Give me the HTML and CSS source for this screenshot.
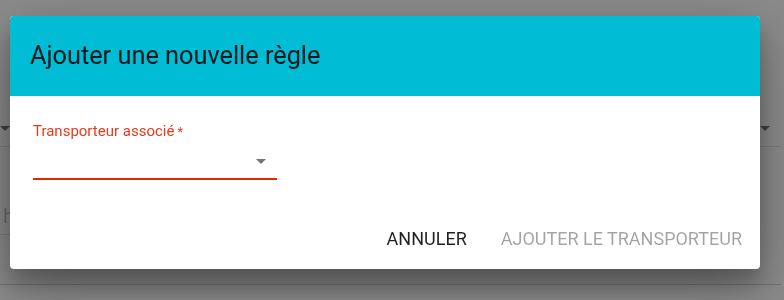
FILE: index.html
```html
<!DOCTYPE html>
<html lang="fr">
<head>
<meta charset="utf-8">
<title>Ajouter une nouvelle règle</title>
<link rel="stylesheet" href="styles.css">
</head>
<body>
<div class="page">
  <div class="bg-row">
    <div class="bg-select"><span class="bg-arrow"></span></div>
    <div class="bg-select"><span class="bg-arrow"></span></div>
  </div>
  <div class="bg-input"><span class="bg-text">h</span></div>
  <div class="bg-divider"></div>
</div>

<div class="overlay"></div>

<div class="dialog" role="dialog">
  <div class="dialog-header">
    <h3 class="dialog-title">Ajouter une nouvelle règle</h3>
  </div>
  <div class="dialog-body">
    <label class="field-label">Transporteur associé<span class="req">*</span></label>
    <div class="field-select"><span class="select-arrow"></span></div>
  </div>
  <div class="dialog-actions">
    <button class="btn">ANNULER</button>
    <button class="btn btn-disabled" disabled>AJOUTER LE TRANSPORTEUR</button>
  </div>
</div>
</body>
</html>
```

FILE: styles.css
```css
html, body {
  margin: 0;
  padding: 0;
  width: 784px;
  height: 300px;
  overflow: hidden;
  background: #ffffff;
  font-family: Roboto, "Noto Sans", sans-serif;
}

/* ---------- page behind the modal ---------- */
.page {
  padding-right: 3px;
}

.bg-row {
  display: flex;
  justify-content: space-between;
  margin-top: 118px;
}

.bg-select {
  width: 10px;
  height: 13px;
  padding-right: 11px;
  padding-bottom: 15px;
  border-bottom: 1px solid #e0e0e0;
  display: flex;
  align-items: flex-end;
  justify-content: flex-end;
}

.bg-arrow {
  width: 0;
  height: 0;
  border-left: 5px solid transparent;
  border-right: 5px solid transparent;
  border-top: 5px solid #757575;
}

.bg-input {
  width: 300px;
  height: 79px;
  padding-bottom: 8px;
  padding-left: 3px;
  border-bottom: 1px solid #e0e0e0;
  display: flex;
  align-items: flex-end;
}
.bg-text {
  font-size: 20px;
  line-height: 20px;
  color: #c4c4c4;
}

.bg-divider {
  margin-top: 49px;
  border-top: 1px solid #cfcfcf;
}

/* ---------- overlay ---------- */
.overlay {
  position: fixed;
  inset: 0;
  background: rgba(0, 0, 0, 0.46);
}

/* ---------- dialog ---------- */
.dialog {
  position: fixed;
  left: 10px;
  top: 16px;
  width: 750px;
  background: #ffffff;
  border-radius: 4px;
  overflow: hidden;
  box-shadow: 0 19px 60px rgba(0, 0, 0, 0.30), 0 15px 20px rgba(0, 0, 0, 0.22);
}

.dialog-header {
  height: 80px;
  background: #00bcd4;
  display: flex;
  align-items: center;
  padding-left: 20px;
}

.dialog-title {
  margin: 0;
  font-size: 25.3px;
  line-height: 32px;
  font-weight: 400;
  color: rgba(0, 0, 0, 0.87);
}

.dialog-body {
  padding: 26px 0 0 23px;
}

.field-label {
  display: block;
  font-size: 15px;
  line-height: 18px;
  color: #e23c1c;
}
.req {
  font-size: 13px;
  margin-left: 3px;
}

.field-select {
  width: 244px;
  height: 37px;
  border-bottom: 2px solid #dd2c00;
  display: flex;
  align-items: flex-end;
  justify-content: flex-end;
}
.select-arrow {
  width: 0;
  height: 0;
  margin-right: 11px;
  margin-bottom: 14px;
  border-left: 5px solid transparent;
  border-right: 5px solid transparent;
  border-top: 5px solid #757575;
}

.dialog-actions {
  display: flex;
  justify-content: flex-end;
  gap: 14px;
  margin-top: 33px;
  padding: 8px 8px 12px;
}

.btn {
  height: 36px;
  line-height: 36px;
  padding: 0 10px;
  border: 0;
  background: transparent;
  font-family: Roboto, "Noto Sans", sans-serif;
  font-size: 18px;
  font-weight: 400;
  color: rgba(0, 0, 0, 0.87);
  cursor: pointer;
}
.btn-disabled {
  color: rgba(0, 0, 0, 0.36);
  cursor: default;
}
```
